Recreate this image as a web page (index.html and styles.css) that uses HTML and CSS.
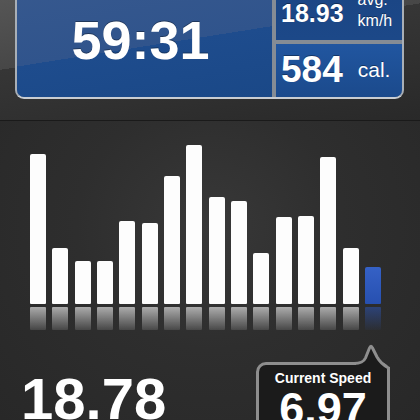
FILE: index.html
```html
<!DOCTYPE html>
<html>
<head>
    <meta charset="UTF-8">
    <title>Ride</title>
    <link rel="stylesheet" href="styles.css">
</head>
<body>
    <header class="top">
        <div class="panel">
            <div class="cell time"><span class="clock">59:31</span></div>
            <div class="cell avg">
                <span class="num">18.93</span>
                <span class="unit">avg.<br>km/h</span>
            </div>
            <div class="cell cal">
                <span class="num big">584</span>
                <span class="unit cal-unit">cal.</span>
            </div>
        </div>
    </header>

    <section class="chart">
        <div class="bars">
            <div class="bar" style="height: 150px"></div>
            <div class="bar" style="height: 56px"></div>
            <div class="bar" style="height: 43px"></div>
            <div class="bar" style="height: 43px"></div>
            <div class="bar" style="height: 83px"></div>
            <div class="bar" style="height: 81px"></div>
            <div class="bar" style="height: 128px"></div>
            <div class="bar" style="height: 159px"></div>
            <div class="bar" style="height: 107px"></div>
            <div class="bar" style="height: 103px"></div>
            <div class="bar" style="height: 51px"></div>
            <div class="bar" style="height: 87px"></div>
            <div class="bar" style="height: 88px"></div>
            <div class="bar" style="height: 147px"></div>
            <div class="bar" style="height: 56px"></div>
            <div class="bar now" style="height: 37px"></div>
        </div>
        <div class="reflect">
            <div class="ref"></div>
            <div class="ref"></div>
            <div class="ref"></div>
            <div class="ref"></div>
            <div class="ref"></div>
            <div class="ref"></div>
            <div class="ref"></div>
            <div class="ref"></div>
            <div class="ref"></div>
            <div class="ref"></div>
            <div class="ref"></div>
            <div class="ref"></div>
            <div class="ref"></div>
            <div class="ref"></div>
            <div class="ref"></div>
            <div class="ref now"></div>
        </div>

        <div class="stats">
            <div class="distance">18.78</div>
            <div class="bubble">
                <svg class="tail" width="36" height="32" viewBox="0 0 36 32">
                    <path d="M2,20.5 Q9,20.5 11.5,15 L15.5,5 Q17,1.5 18.5,5 L23,14 Q27,21 34.5,25 L34.5,32 L2,32 Z" fill="#1b1b1b"/>
                    <path d="M0,20.5 Q9,20.5 11.5,15 L15.5,5 Q17,1.5 18.5,5 L23,14 Q27,21 34.5,25 L34.5,32" fill="none" stroke="#8e8e8e" stroke-width="3"/>
                </svg>
                <div class="label">Current Speed</div>
                <div class="speed">6.97</div>
            </div>
        </div>
    </section>
</body>
</html>
```

FILE: styles.css
```css
body {
    margin: 0;
    width: 420px;
    height: 420px;
    overflow: hidden;
    background-color: #2a2a2a;
    font-family: "Liberation Sans", Arial, sans-serif;
    color: #fff;
}
.top {
    display: flex;
    align-items: flex-start;
    height: 120px;
    padding-left: 15px;
    border-bottom: 1px solid #1a1a1a;
    background: linear-gradient(171deg, #555 0, #474747 69px, #363636 69px, #292929 100%);
}
.panel {
    display: grid;
    grid-template-columns: 255px 126px;
    grid-template-rows: 98px 53px;
    gap: 4px;
    margin-top: -60px;
    border: 2px solid #a9afb6;
    border-bottom-color: #c9cdd2;
    border-radius: 9px;
    background-color: #858c95;
    overflow: hidden;
}
.cell {
    display: flex;
    align-items: flex-end;
    text-shadow: 0 -1px 0 rgba(0, 0, 0, 0.35);
}
.time {
    grid-row: 1 / 3;
    justify-content: center;
    padding-bottom: 30px;
    background: linear-gradient(171deg, #3a5b90 0, #30548c 123px, #1e4c8d 123px, #1a4887 100%);
}
.clock {
    font-size: 54px;
    font-weight: bold;
    line-height: 1;
    margin-right: 8px;
}
.avg {
    padding: 0 0 9px 5px;
    background: linear-gradient(#1a4381, #1c4888);
}
.cal {
    padding: 0 0 9px 5px;
    background: linear-gradient(#2156a0, #1b4a8c);
}
.num {
    font-size: 25px;
    font-weight: bold;
    line-height: 1;
    margin-bottom: 5px;
}
.num.big {
    font-size: 37px;
    margin-bottom: 0;
}
.unit {
    margin-left: 14px;
    font-size: 16px;
    line-height: 21px;
}
.cal-unit {
    margin-left: 15px;
    margin-bottom: 8px;
    font-size: 21px;
    line-height: 1;
}
.chart {
    height: 299px;
    background: radial-gradient(ellipse at 50% 35%, #383838 0, #2e2e2e 45%, #282828 100%);
}
.bars, .reflect {
    display: flex;
    gap: 6.33px;
    padding-left: 30px;
}
.bars {
    align-items: flex-end;
    height: 183px;
}
.bar {
    width: 16px;
    border-radius: 2px 2px 1px 1px;
    background-color: #fdfdfd;
}
.bar.now {
    background: linear-gradient(#3561c6, #2750b0);
}
.reflect {
    height: 23px;
    margin-top: 3px;
}
.ref {
    width: 16px;
    border-radius: 1px;
    background: linear-gradient(rgba(255, 255, 255, 0.6), rgba(255, 255, 255, 0.12));
}
.ref.now {
    background: linear-gradient(rgba(45, 85, 180, 0.55), rgba(45, 85, 180, 0.05));
}
.stats {
    display: flex;
    justify-content: space-between;
    align-items: flex-start;
    padding: 0 30px 0 21px;
}
.distance {
    margin-top: 40px;
    font-size: 58px;
    font-weight: bold;
    line-height: 1;
}
.bubble {
    position: relative;
    width: 128px;
    height: 80px;
    margin-top: 32px;
    padding-top: 6px;
    border: 3px solid #8e8e8e;
    border-radius: 10px;
    background-color: #1b1b1b;
    text-align: center;
}
.tail {
    position: absolute;
    right: -3px;
    top: -22px;
}
.label {
    position: relative;
    font-size: 14px;
    font-weight: bold;
    line-height: 1;
}
.speed {
    margin-top: 1px;
    font-size: 45px;
    font-weight: bold;
    line-height: 1;
}
```
